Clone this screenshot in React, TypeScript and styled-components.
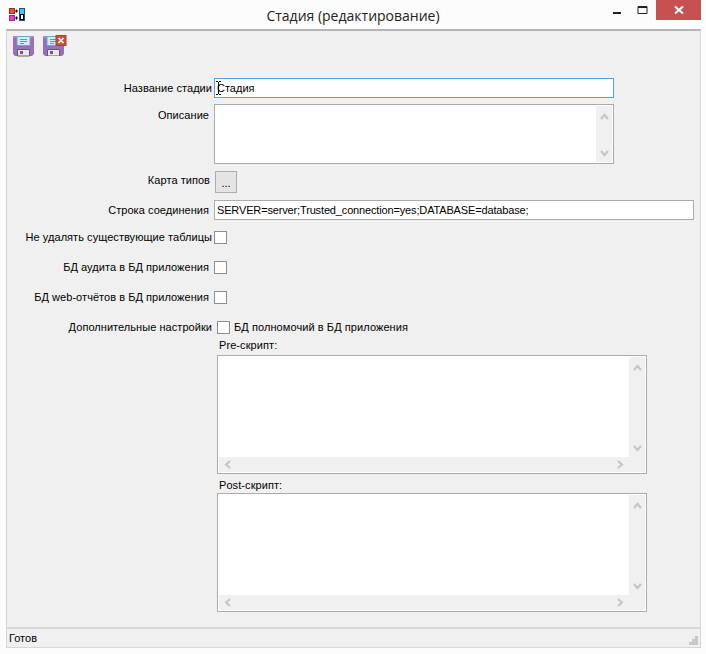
import React from "react";
import styled, { createGlobalStyle } from "styled-components";

const Global = createGlobalStyle`
  html, body {
    margin: 0;
    padding: 0;
    background: #fcfcfc;
  }
  * {
    box-sizing: border-box;
  }
`;

const Window = styled.div`
  width: 706px;
  height: 654px;
  display: flex;
  flex-direction: column;
  background: #fcfcfc;
  font-family: "Liberation Sans", Arial, sans-serif;
  font-size: 11px;
  color: #000;
  overflow: hidden;
`;

const TitleBar = styled.div`
  position: relative;
  height: 29px;
  flex: none;
  display: flex;
  justify-content: center;
  padding: 6px 0 0 0;
`;

const AppIcon = styled.svg`
  position: absolute;
  left: 9px;
  top: 8px;
`;

const Title = styled.div`
  font-family: "Open Sans", sans-serif;
  font-size: 14px;
  line-height: 19px;
  color: #222;
`;

const Controls = styled.div`
  position: absolute;
  right: 5px;
  top: 0;
  display: flex;
`;

const ControlButton = styled.div<{ $close?: boolean }>`
  width: ${(p) => (p.$close ? "45px" : "26px")};
  height: 20px;
  display: flex;
  align-items: center;
  justify-content: center;
  background: ${(p) => (p.$close ? "#c75050" : "transparent")};
`;

const Client = styled.div`
  flex: 1;
  margin: 0 5px 6px 6px;
  display: flex;
  flex-direction: column;
  background: #f0f0f0;
  border-top: 2px solid #b4b4b4;
  border-left: 1px solid #d6d6d6;
  border-right: 1px solid #d6d6d6;
  border-bottom: 1px solid #d6d6d6;
`;

const Toolbar = styled.div`
  height: 47px;
  flex: none;
  display: flex;
  gap: 9px;
  padding: 5px 0 0 6px;
  align-items: flex-start;
`;

const ToolIcon = styled.svg<{ $lift?: number }>`
  margin-top: ${(p) => -(p.$lift ?? 0)}px;
`;

const Form = styled.div`
  flex: 1;
  display: flex;
  flex-direction: column;
`;

const Row = styled.div<{ $top: number }>`
  display: flex;
  align-items: flex-start;
  margin-top: ${(p) => p.$top}px;
`;

const Label = styled.div<{ $gap: number; $pad?: number }>`
  width: 207px;
  flex: none;
  text-align: right;
  white-space: nowrap;
  line-height: 13px;
  letter-spacing: 0.05px;
  padding-right: ${(p) => p.$gap}px;
  padding-top: ${(p) => p.$pad ?? 0}px;
`;

const Field = styled.div<{ $w: number; $focus?: boolean }>`
  position: relative;
  width: ${(p) => p.$w}px;
  height: 20px;
  background: #fff;
  border: 1px solid ${(p) => (p.$focus ? "#5a9fdc" : "#ababab")};
  padding-left: 2px;
  line-height: 18px;
  white-space: nowrap;
  letter-spacing: ${(p) => (p.$focus ? "0" : "-0.15px")};
`;

const Cursor = styled.svg`
  position: absolute;
  left: 1px;
  top: 2px;
`;

const Memo = styled.div<{ $w: number; $h: number; $top?: number }>`
  width: ${(p) => p.$w}px;
  height: ${(p) => p.$h}px;
  margin-top: ${(p) => p.$top ?? 0}px;
  background: #fff;
  border: 1px solid #ababab;
  padding: 1px;
  display: flex;
  flex-direction: column;
`;

const MemoBody = styled.div`
  flex: 1;
  min-height: 0;
  display: flex;
`;

const MemoText = styled.div`
  flex: 1;
  background: #fff;
`;

const VScroll = styled.div`
  width: 16px;
  flex: none;
  background: #f0f0f0;
  display: flex;
  flex-direction: column;
  justify-content: space-between;
  align-items: center;
  padding: 6px 0 4px;
`;

const HScroll = styled.div`
  height: 15px;
  flex: none;
  background: #f0f0f0;
  display: flex;
  justify-content: space-between;
  align-items: center;
  padding: 0 20px 0 4px;
`;

const DotsButton = styled.div`
  width: 22px;
  height: 22px;
  margin-left: 1px;
  background: #e4e4e4;
  border: 1px solid #acacac;
  text-align: center;
  line-height: 22px;
`;

const Check = styled.div<{ $shift?: number }>`
  width: 13px;
  height: 13px;
  flex: none;
  background: #fff;
  border: 1px solid #8e8e8e;
  margin-left: ${(p) => p.$shift ?? 0}px;
`;

const CheckText = styled.div`
  margin-left: 4px;
  line-height: 13px;
  letter-spacing: 0.08px;
`;

const Extras = styled.div`
  margin-left: 210px;
  display: flex;
  flex-direction: column;
`;

const Caption = styled.div<{ $top: number }>`
  margin: ${(p) => p.$top}px 0 0 2px;
  height: 14px;
  line-height: 14px;
  letter-spacing: 0.08px;
`;

const StatusBar = styled.div`
  position: relative;
  height: 20px;
  flex: none;
  border-top: 2px solid #d9d9d9;
  padding: 2px 0 0 2px;
  line-height: 14px;
`;

const Grip = styled.svg`
  position: absolute;
  right: 2px;
  bottom: 2px;
`;

const ChevronIcon = styled.svg<{ $turn: number }>`
  transform: rotate(${(p) => p.$turn}deg);
`;

type ChevronProps = { dir: "up" | "down" | "left" | "right" };

// Scrollbar arrow, drawn the way the disabled Win8 arrows look
function Chevron({ dir }: ChevronProps) {
  const turn = { up: 0, right: 90, down: 180, left: 270 }[dir];
  return (
    <ChevronIcon $turn={turn} width="9" height="9" viewBox="0 0 9 9">
      <path d="M1 7 L4.5 3 L8 7" fill="none" stroke="#c6c6c6" strokeWidth="2.2" />
    </ChevronIcon>
  );
}

function Floppy() {
  return (
    <>
      <path d="M0 0 H21 V18 L19 20 H2 L0 18 Z" fill="#9670bd" />
      <path d="M0 0 H21 V2 H0 Z" fill="#a98ac9" />
      <path d="M4 0.5 H17 V9.5 H4 Z" fill="#cdeef5" stroke="#6fa9bd" strokeWidth="1" />
      <path d="M7 3.5 H14 M7 5.5 H14 M7 7.5 H11" stroke="#5f9bb2" strokeWidth="1" />
      <path d="M4.5 13.5 H16.5 V20 H4.5 Z" fill="#e8e8e8" stroke="#5e5e5e" strokeWidth="1" />
      <path d="M7 15 H10 V18 H7 Z" fill="#7a4fa0" />
    </>
  );
}

function SaveIcon() {
  return (
    <ToolIcon width="21" height="21" viewBox="0 0 21 21">
      <Floppy />
    </ToolIcon>
  );
}

function SaveCloseIcon() {
  return (
    <ToolIcon $lift={1} width="24" height="21" viewBox="0 -1 24 21">
      <Floppy />
      <rect x="13" y="-0.5" width="10" height="10" fill="#d9483b" stroke="#a8402f" />
      <path d="M15.5 2 L20.5 7 M20.5 2 L15.5 7" stroke="#fff" strokeWidth="1.6" />
    </ToolIcon>
  );
}

export default function App() {
  return (
    <Window>
      <Global />
      <TitleBar>
        <AppIcon width="17" height="14" viewBox="0 0 17 14">
          <rect x="0.5" y="0.5" width="5" height="5" fill="#e8503a" stroke="#a52a1a" />
          <rect x="0.5" y="7.5" width="5" height="5" fill="#e040d0" stroke="#a020a0" />
          <path d="M6 3 H9 M7.5 1.5 V4.5 M6 10 H9 M7.5 8.5 V11.5" stroke="#000" />
          <rect x="10.5" y="0.5" width="5" height="12" fill="#4fc0f0" stroke="#1a4f9a" />
          <rect x="11.5" y="6.5" width="3" height="5" fill="#fff" stroke="#000" />
        </AppIcon>
        <Title>Стадия (редактирование)</Title>
        <Controls>
          <ControlButton>
            <svg width="10" height="10" viewBox="0 0 10 10">
              <rect x="1" y="7" width="8" height="2" fill="#222" />
            </svg>
          </ControlButton>
          <ControlButton>
            <svg width="12" height="10" viewBox="0 0 12 10">
              <path d="M1 1.5 H10 V8.5 H1 Z" fill="none" stroke="#222" />
              <rect x="1" y="1" width="9" height="2" fill="#222" />
            </svg>
          </ControlButton>
          <ControlButton $close>
            <svg width="10" height="10" viewBox="0 0 10 10">
              <path d="M1 1.5 L9 8.5 M9 1.5 L1 8.5" stroke="#fff" strokeWidth="2" />
            </svg>
          </ControlButton>
        </Controls>
      </TitleBar>

      <Client>
        <Toolbar>
          <SaveIcon />
          <SaveCloseIcon />
        </Toolbar>

        <Form>
          <Row $top={0}>
            <Label $gap={2} $pad={4}>Название стадии</Label>
            <Field $w={400} $focus>
              Стадия
              <Cursor width="5" height="14" viewBox="0 0 5 14">
                <path d="M0 0.5 H2 M3 0.5 H5 M2.5 1 V13 M0 13.5 H2 M3 13.5 H5" stroke="#000" strokeWidth="1" />
              </Cursor>
            </Field>
          </Row>
          <Row $top={6}>
            <Label $gap={5} $pad={5}>Описание</Label>
            <Memo $w={400} $h={60}>
              <MemoBody>
                <MemoText />
                <VScroll>
                  <Chevron dir="up" />
                  <Chevron dir="down" />
                </VScroll>
              </MemoBody>
            </Memo>
          </Row>
          <Row $top={7}>
            <Label $gap={4} $pad={3}>Карта типов</Label>
            <DotsButton>...</DotsButton>
          </Row>
          <Row $top={7}>
            <Label $gap={5} $pad={4}>Строка соединения</Label>
            <Field $w={480}>SERVER=server;Trusted_connection=yes;DATABASE=database;</Field>
          </Row>
          <Row $top={11}>
            <Label $gap={2}>Не удалять существующие таблицы</Label>
            <Check />
          </Row>
          <Row $top={17}>
            <Label $gap={5}>БД аудита в БД приложения</Label>
            <Check />
          </Row>
          <Row $top={17}>
            <Label $gap={5}>БД web-отчётов в БД приложения</Label>
            <Check />
          </Row>
          <Row $top={17}>
            <Label $gap={2}>Дополнительные настройки</Label>
            <Check $shift={3} />
            <CheckText>БД полномочий в БД приложения</CheckText>
          </Row>
          <Extras>
            <Caption $top={4}>Pre-скрипт:</Caption>
            <Memo $w={430} $h={119} $top={3}>
              <MemoBody>
                <MemoText />
                <VScroll>
                  <Chevron dir="up" />
                  <Chevron dir="down" />
                </VScroll>
              </MemoBody>
              <HScroll>
                <Chevron dir="left" />
                <Chevron dir="right" />
              </HScroll>
            </Memo>
            <Caption $top={4}>Post-скрипт:</Caption>
            <Memo $w={430} $h={119} $top={1}>
              <MemoBody>
                <MemoText />
                <VScroll>
                  <Chevron dir="up" />
                  <Chevron dir="down" />
                </VScroll>
              </MemoBody>
              <HScroll>
                <Chevron dir="left" />
                <Chevron dir="right" />
              </HScroll>
            </Memo>
          </Extras>
        </Form>

        <StatusBar>
          Готов
          <Grip width="9" height="9" viewBox="0 0 9 9">
            <path d="M6 0 H9 V3 H6 Z M3 3 H6 V6 H3 Z M6 3 H9 V6 H6 Z M0 6 H3 V9 H0 Z M3 6 H6 V9 H3 Z M6 6 H9 V9 H6 Z" fill="#c8c8c8" />
          </Grip>
        </StatusBar>
      </Client>
    </Window>
  );
}
